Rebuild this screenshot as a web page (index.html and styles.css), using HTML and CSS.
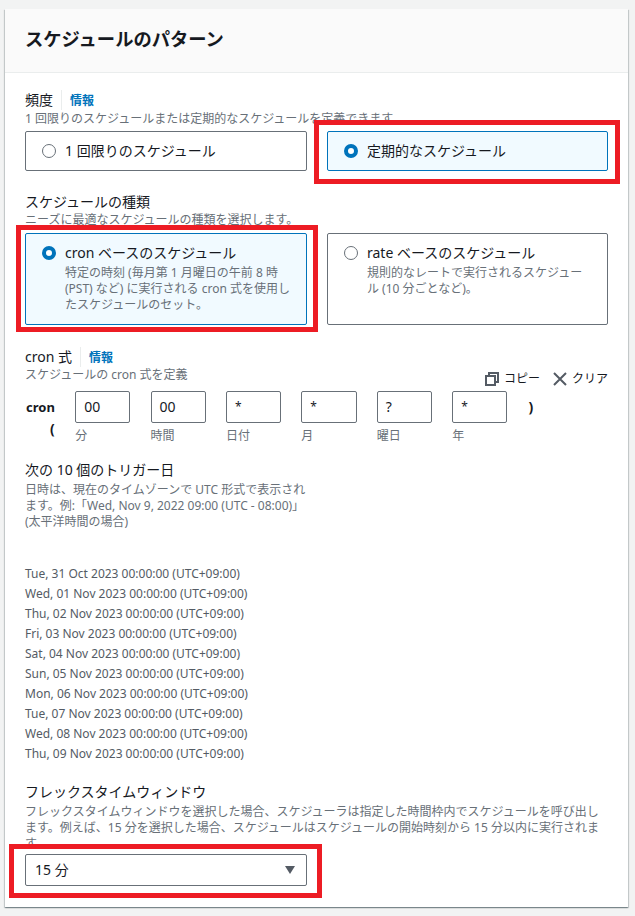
FILE: index.html
```html
<!DOCTYPE html>
<html lang="ja">
<head>
<meta charset="utf-8">
<title>スケジュールのパターン</title>
<link rel="stylesheet" href="styles.css">
</head>
<body>
<main class="card">
  <header class="card-header"><h2>スケジュールのパターン</h2></header>
  <div class="card-body">
    <div class="label"><span class="label-text">頻度</span><a class="info">情報</a></div>
    <p class="desc">1 回限りのスケジュールまたは定期的なスケジュールを定義できます。</p>
    <div class="tiles tiles-first">
      <div class="tile"><span class="radio"></span><div class="tile-text"><div>1 回限りのスケジュール</div></div></div>
      <div class="tile selected"><span class="radio"></span><div class="tile-text"><div>定期的なスケジュール</div></div></div>
    </div>

    <div class="label section-type"><span>スケジュールの種類</span></div>
    <p class="desc">ニーズに最適なスケジュールの種類を選択します。</p>
    <div class="tiles tiles-second">
      <div class="tile selected"><span class="radio"></span><div class="tile-text"><div>cron ベースのスケジュール</div><p class="desc">特定の時刻 (毎月第 1 月曜日の午前 8 時 (PST) など) に実行される cron 式を使用したスケジュールのセット。</p></div></div>
      <div class="tile"><span class="radio"></span><div class="tile-text"><div>rate ベースのスケジュール</div><p class="desc">規則的なレートで実行されるスケジュール (10 分ごとなど)。</p></div></div>
    </div>

    <div class="cron-head">
      <div>
        <div class="label"><span class="label-text">cron 式</span><a class="info">情報</a></div>
        <p class="desc">スケジュールの cron 式を定義</p>
      </div>
      <div class="actions">
        <span class="action"><svg viewBox="0 0 14 14" width="14" height="14"><path d="M4 3.5V1h9v9h-3" fill="none" stroke="#545b64" stroke-width="2"/><rect x="1" y="4" width="9" height="9" fill="none" stroke="#545b64" stroke-width="2"/></svg>コピー</span>
        <span class="action"><svg viewBox="0 0 14 14" width="14" height="14"><path d="M1 1l12 12M13 1L1 13" fill="none" stroke="#545b64" stroke-width="2"/></svg>クリア</span>
      </div>
    </div>
    <div class="cron-row">
      <div class="cron-word">cron<br><span class="paren">(</span></div>
      <div class="field"><div class="input">00</div><span class="cap">分</span></div>
      <div class="field"><div class="input">00</div><span class="cap">時間</span></div>
      <div class="field"><div class="input star">*</div><span class="cap">日付</span></div>
      <div class="field"><div class="input star">*</div><span class="cap">月</span></div>
      <div class="field"><div class="input">?</div><span class="cap">曜日</span></div>
      <div class="field"><div class="input star">*</div><span class="cap">年</span></div>
      <div class="close-paren">)</div>
    </div>

    <div class="label section-next"><span>次の 10 個のトリガー日</span></div>
    <p class="desc narrow">日時は、現在のタイムゾーンで UTC 形式で表示されます。例:「Wed, Nov 9, 2022 09:00 (UTC - 08:00)」<br>(太平洋時間の場合)</p>
    <ul class="dates">
      <li>Tue, 31 Oct 2023 00:00:00 (UTC+09:00)</li>
      <li>Wed, 01 Nov 2023 00:00:00 (UTC+09:00)</li>
      <li>Thu, 02 Nov 2023 00:00:00 (UTC+09:00)</li>
      <li>Fri, 03 Nov 2023 00:00:00 (UTC+09:00)</li>
      <li>Sat, 04 Nov 2023 00:00:00 (UTC+09:00)</li>
      <li>Sun, 05 Nov 2023 00:00:00 (UTC+09:00)</li>
      <li>Mon, 06 Nov 2023 00:00:00 (UTC+09:00)</li>
      <li>Tue, 07 Nov 2023 00:00:00 (UTC+09:00)</li>
      <li>Wed, 08 Nov 2023 00:00:00 (UTC+09:00)</li>
      <li>Thu, 09 Nov 2023 00:00:00 (UTC+09:00)</li>
    </ul>

    <div class="label section-flex"><span>フレックスタイムウィンドウ</span></div>
    <p class="desc flex-desc">フレックスタイムウィンドウを選択した場合、スケジューラは指定した時間枠内でスケジュールを呼び出します。例えば、15 分を選択した場合、スケジュールはスケジュールの開始時刻から 15 分以内に実行されます。</p>
    <div class="select"><span>15 分</span><span class="caret"></span></div>
  </div>
</main>
<div class="mark mark-1"></div>
<div class="mark mark-2"></div>
<div class="mark mark-3"></div>
</body>
</html>
```
FILE: styles.css
```css
* { box-sizing: border-box; }
html, body { margin: 0; padding: 0; }
body {
  position: relative;
  width: 635px;
  height: 916px;
  overflow: hidden;
  background: #f2f3f3;
  color: #16191f;
  font-family: "Noto Sans", "Noto Sans CJK JP", sans-serif;
  font-size: 14px;
  line-height: 20px;
}
p, h2, ul { margin: 0; padding: 0; }
.card {
  margin: 9px 7px 0 5px;
  height: 898px;
  background: #fff;
  box-shadow: 0 1px 1px 0 rgba(0, 28, 36, .3), 1px 1px 1px 0 rgba(0, 28, 36, .15), -1px 1px 1px 0 rgba(0, 28, 36, .15);
}
.card-header {
  height: 64px;
  padding: 19px 20px 0;
  background: #fafafa;
  border-bottom: 1px solid #eaeded;
}
.card-header h2 { font-size: 18.3px; line-height: 22px; font-weight: 700; }
.card-body { padding: 17px 20px 0; }
.label { display: flex; align-items: center; height: 20px; }
.label-text { padding-right: 8px; border-right: 1px solid #eaeded; }
.info { padding: 1px 0 0 8px; color: #0073bb; font-size: 12px; font-weight: 700; }
.desc { font-size: 12px; line-height: 16px; color: #687078; }
.card-body > .desc:nth-child(2) { padding-top: 1px; margin-bottom: -1px; }
.narrow { width: 282px; margin-top: 2px; }
.tiles { display: grid; grid-template-columns: 282px 281px; column-gap: 20px; }
.tiles-first { margin-top: 5px; height: 40px; }
.tiles-second { margin-top: 5px; height: 92px; }
.tile {
  display: flex;
  gap: 9px;
  padding: 9px 13px 9px 16px;
  border: 1px solid #687078;
  border-radius: 2px;
  background: #fff;
}
.tile.selected { border-color: #0073bb; background: #f1faff; }
.radio {
  flex: none;
  width: 14px;
  height: 14px;
  margin-top: 3px;
  border: 1px solid #687078;
  border-radius: 50%;
  background: #fff;
}
.selected .radio { border: 4px solid #0073bb; }
.tile-text { min-width: 0; }
.tile-text .desc { margin-top: 2px; }
.section-type { margin-top: 21px; }
.cron-head { display: flex; justify-content: space-between; margin-top: 22px; height: 44px; }
.actions { display: flex; gap: 13px; align-self: flex-end; height: 20px; margin-bottom: 2px; }
.action { display: flex; align-items: center; gap: 5px; font-size: 12px; color: #16191f; }
.cron-row { display: flex; align-items: flex-start; }
.cron-word { width: 50.2px; padding: 6px 0 0 1px; font-weight: 700; font-size: 13px; line-height: 21px; }
.paren { display: block; padding-left: 24px; font-size: 14px; }
.field { width: 55.3px; margin-right: 20.1px; }
.input {
  height: 32px;
  padding: 0 8px;
  border: 1px solid #687078;
  border-radius: 2px;
  line-height: 30px;
  font-size: 14px;
}
.input.star { font-size: 12px; }
.cap { display: block; margin-top: 5px; font-size: 12px; line-height: 16px; color: #687078; }
.close-paren { padding-top: 6px; margin-left: 1px; font-weight: 700; }
.section-next { margin-top: 16px; }
.dates { list-style: none; margin-top: 34px; font-size: 12px; line-height: 20px; color: #545b64; }
.section-flex { margin-top: 18px; }
.flex-desc { margin-top: 2px; }
.select {
  display: flex;
  align-items: center;
  justify-content: space-between;
  width: 282px;
  height: 32px;
  margin-top: 2px;
  padding: 0 11px 0 9px;
  border: 1px solid #687078;
  border-radius: 2px;
  background: #fff;
}
.caret {
  width: 0;
  height: 0;
  border-left: 5.5px solid transparent;
  border-right: 5.5px solid transparent;
  border-top: 8px solid #545b64;
}
.mark { position: absolute; border: 5px solid #ed1c24; }
.mark-1 { left: 314px; top: 120px; width: 306px; height: 64px; }
.mark-2 { left: 16px; top: 225px; width: 302px; height: 107px; }
.mark-3 { left: 9px; top: 844px; width: 313px; height: 54px; }
```
